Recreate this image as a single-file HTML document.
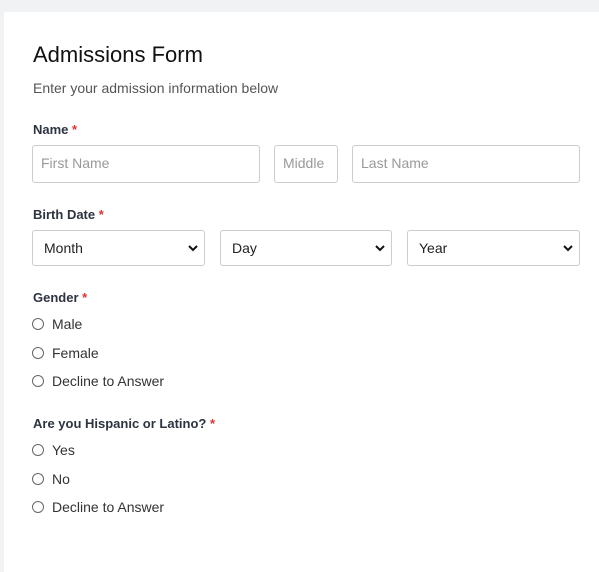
<!DOCTYPE html>
<html><head><style>
body{margin:0;width:599px;height:545px;background:#f1f2f4;overflow:hidden;font-family:"Liberation Sans",sans-serif;position:relative}
.card{position:absolute;left:4px;top:12px;width:620px;height:560px;background:#fff}
.a{position:absolute;white-space:nowrap}
h1{position:absolute;left:33px;top:42px;margin:0;font-size:22px;font-weight:normal;color:#111}
.sub{left:33px;top:80px;font-size:14px;color:#555}
.lbl{font-size:13px;font-weight:bold;color:#2d3340}
.lbl span{color:#d33}
.in{position:absolute;box-sizing:border-box;border:1px solid #ccc;border-radius:3px;background:#fff;font-size:14px;color:#999;padding-left:8px;line-height:35px}
.sel{color:#222;padding-left:11px}
.sel svg{position:absolute;right:6px;top:13px}
.r{position:absolute;left:32px;font-size:14px;color:#333}
.r i{display:inline-block;width:10px;height:10px;border:1px solid #666;border-radius:50%;vertical-align:-1px;margin-right:8px}
</style></head><body>
<div class="card"></div>
<h1>Admissions Form</h1>
<div class="a sub">Enter your admission information below</div>
<div class="a lbl" style="left:33px;top:122px">Name <span>*</span></div>
<div class="in" style="left:32px;top:145px;width:228px;height:38px">First Name</div>
<div class="in" style="left:274px;top:145px;width:64px;height:38px">Middle</div>
<div class="in" style="left:352px;top:145px;width:228px;height:38px">Last Name</div>
<div class="a lbl" style="left:33px;top:207px">Birth Date <span>*</span></div>
<div class="in sel" style="left:32px;top:230px;width:173px;height:36px">Month<svg width="10" height="8" viewBox="0 0 10 8"><path d="M1 2l4 4 4-4" stroke="#111" stroke-width="2" fill="none"/></svg></div>
<div class="in sel" style="left:220px;top:230px;width:172px;height:36px">Day<svg width="10" height="8" viewBox="0 0 10 8"><path d="M1 2l4 4 4-4" stroke="#111" stroke-width="2" fill="none"/></svg></div>
<div class="in sel" style="left:407px;top:230px;width:173px;height:36px">Year<svg width="10" height="8" viewBox="0 0 10 8"><path d="M1 2l4 4 4-4" stroke="#111" stroke-width="2" fill="none"/></svg></div>
<div class="a lbl" style="left:33px;top:290px">Gender <span>*</span></div>
<div class="r" style="top:316px"><i></i>Male</div>
<div class="r" style="top:345px"><i></i>Female</div>
<div class="r" style="top:373px"><i></i>Decline to Answer</div>
<div class="a lbl" style="left:33px;top:416px">Are you Hispanic or Latino? <span>*</span></div>
<div class="r" style="top:442px"><i></i>Yes</div>
<div class="r" style="top:471px"><i></i>No</div>
<div class="r" style="top:499px"><i></i>Decline to Answer</div>
</body></html>
